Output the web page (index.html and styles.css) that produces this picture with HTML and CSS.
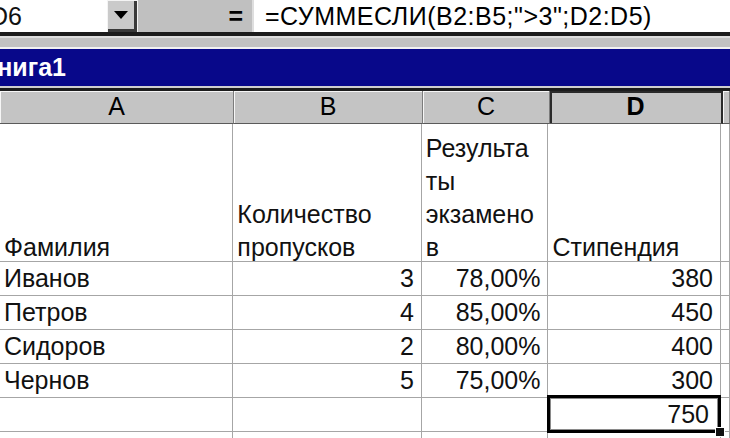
FILE: index.html
```html
<!DOCTYPE html>
<html lang="ru">

<head>
  <meta charset="UTF-8">
  <meta name="viewport" content="width=device-width, initial-scale=1.0">
  <title>Книга1</title>
  <link rel="stylesheet" href="styles.css">
</head>

<body>
  <div class="App">

    <div class="Formula-Bar">
      <div class="Name-Box">D6</div>
      <div class="Name-Drop"><span class="Arrow"></span></div>
      <div class="Bar-Mid"><span class="Eq">=</span></div>
      <div class="Formula">=СУММЕСЛИ(B2:B5;"&gt;3";D2:D5)</div>
    </div>

    <div class="Band"></div>
    <div class="Title">Книга1</div>

    <div class="Sheet">
      <div class="Row Col-Heads">
        <div class="Hc col-A">A</div>
        <div class="Hc col-B">B</div>
        <div class="Hc col-C">C</div>
        <div class="Hc col-D is-Sel">D</div>
        <div class="Hc col-E"></div>
      </div>

      <div class="Row Head-Row">
        <div class="Cell col-A"><div class="Wrap">Фамилия</div></div>
        <div class="Cell col-B"><div class="Wrap">Количество пропусков</div></div>
        <div class="Cell col-C"><div class="Wrap">Результа<br>ты<br>экзамено<br>в</div></div>
        <div class="Cell col-D"><div class="Wrap">Стипендия</div></div>
        <div class="Cell col-E"></div>
      </div>

      <div class="Row">
        <div class="Cell col-A">Иванов</div>
        <div class="Cell col-B is-Num">3</div>
        <div class="Cell col-C is-Num">78,00%</div>
        <div class="Cell col-D is-Num">380</div>
        <div class="Cell col-E"></div>
      </div>
      <div class="Row">
        <div class="Cell col-A">Петров</div>
        <div class="Cell col-B is-Num">4</div>
        <div class="Cell col-C is-Num">85,00%</div>
        <div class="Cell col-D is-Num">450</div>
        <div class="Cell col-E"></div>
      </div>
      <div class="Row">
        <div class="Cell col-A">Сидоров</div>
        <div class="Cell col-B is-Num">2</div>
        <div class="Cell col-C is-Num">80,00%</div>
        <div class="Cell col-D is-Num">400</div>
        <div class="Cell col-E"></div>
      </div>
      <div class="Row">
        <div class="Cell col-A">Чернов</div>
        <div class="Cell col-B is-Num">5</div>
        <div class="Cell col-C is-Num">75,00%</div>
        <div class="Cell col-D is-Num">300</div>
        <div class="Cell col-E"></div>
      </div>
      <div class="Row">
        <div class="Cell col-A"></div>
        <div class="Cell col-B"></div>
        <div class="Cell col-C"></div>
        <div class="Cell col-D is-Num is-Active">750</div>
        <div class="Cell col-E"></div>
      </div>
      <div class="Row">
        <div class="Cell col-A"></div>
        <div class="Cell col-B"></div>
        <div class="Cell col-C"></div>
        <div class="Cell col-D"></div>
        <div class="Cell col-E"></div>
      </div>
    </div>

  </div>
</body>

</html>
```

FILE: styles.css
```css
html,
body {
  margin: 0;
  padding: 0;
}

body {
  width: 730px;
  height: 438px;
  overflow: hidden;
  background-color: #fff;
  font-family: "Liberation Sans", Arial, sans-serif;
  font-size: 25px;
  color: #111;
}

.App {
  width: 730px;
  height: 438px;
  overflow: hidden;
}

/* строка формул */
.Formula-Bar {
  display: flex;
  height: 32px;
  border-bottom: 4px solid #1c1c1c;
  line-height: 32px;
  white-space: nowrap;
}

.Name-Box {
  width: 107px;
  background-color: #fff;
  text-indent: -10px;
  overflow: hidden;
}

.Name-Drop {
  width: 30px;
  background-color: #cacaca;
  box-shadow: inset 1px 1px 0 #f4f4f4, inset -3px -3px 0 #3a3a3a;
  display: flex;
  align-items: center;
  justify-content: center;
}

.Arrow {
  width: 0;
  height: 0;
  margin: -3px 2px 0 0;
  border-left: 7px solid transparent;
  border-right: 7px solid transparent;
  border-top: 8px solid #000;
}

.Bar-Mid {
  width: 105px;
  padding-right: 9px;
  border-left: 1px solid #f2f2f2;
  border-right: 2px solid #dedede;
  background-color: #c0c0c0;
  text-align: right;
}

.Eq {
  font-weight: bold;
  color: #000;
}

.Formula {
  flex: 1;
  padding-left: 11px;
  background-color: #fff;
  color: #000;
  letter-spacing: 0.5px;
}

/* окно книги */
.Band {
  height: 9px;
  border-top: 2px solid #dedede;
  border-bottom: 2px solid #f2f2f2;
  background-color: #c2c2c2;
}

.Title {
  height: 37px;
  line-height: 37px;
  border-bottom: 2px solid #cfcfcf;
  background-color: #08088a;
  color: #fff;
  font-weight: bold;
  text-indent: -18px;
  overflow: hidden;
  white-space: nowrap;
}

.Sheet {
  border-top: 3px solid #1c1c1c;
}

.Row {
  display: flex;
  height: 34px;
}

.col-A { width: 234px; }
.col-B { width: 189px; }
.col-C { width: 127px; }
.col-D { width: 173px; }
.col-E { flex: 1; }

/* заголовки столбцов */
.Col-Heads {
  height: 33px;
}

.Hc {
  box-sizing: border-box;
  height: 33px;
  line-height: 31px;
  border-right: 1px solid #7c7c7c;
  border-bottom: 1px solid #5a5a5a;
  background-color: #c4c4c4;
  box-shadow: inset 1px 1px 0 #f6f6f6;
  text-align: center;
  color: #000;
}

.Hc.is-Sel {
  font-weight: bold;
  border-right: 2px solid #2a2a2a;
  box-shadow: inset 2px 2px 0 #2a2a2a;
}

/* ячейки */
.Cell {
  box-sizing: border-box;
  height: 34px;
  line-height: 33px;
  padding: 0 4px;
  border-right: 1px solid #a6a6a6;
  border-bottom: 1px solid #a6a6a6;
  white-space: nowrap;
}

.Cell.is-Num {
  text-align: right;
  padding-right: 7px;
}

.Head-Row {
  height: 138px;
}

.Head-Row .Cell {
  height: 138px;
  display: flex;
  flex-direction: column;
  justify-content: flex-end;
  white-space: normal;
}

.Head-Row .Wrap {
  margin-bottom: -3px;
}

/* активная ячейка D6 */
.Cell.is-Active {
  position: relative;
  padding-right: 11px;
}

.Cell.is-Active::before {
  content: '';
  position: absolute;
  top: -3px;
  left: -1px;
  right: -1px;
  bottom: -2px;
  border: 3px solid #000;
  box-shadow: inset 0 0 0 1px #8a8a8a;
}

.Cell.is-Active::after {
  content: '';
  position: absolute;
  right: -4px;
  bottom: -5px;
  width: 8px;
  height: 8px;
  background-color: #111;
  box-shadow: 0 0 0 1px #fff;
}
```
